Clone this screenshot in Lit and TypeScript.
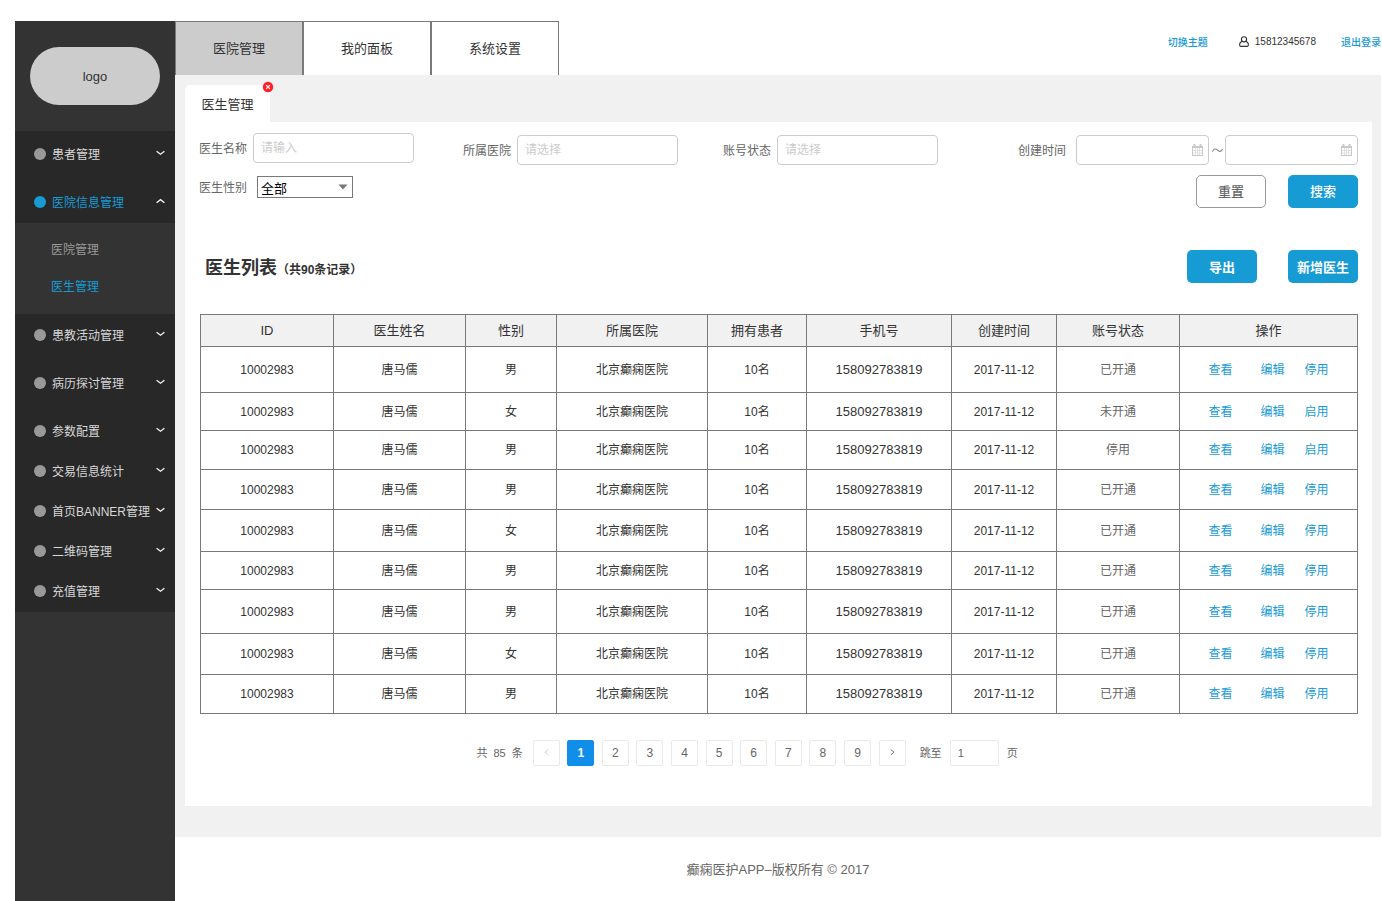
import { LitElement, html, css, svg, nothing } from "lit";
import { customElement, state } from "lit/decorators.js";
import { classMap } from "lit/directives/class-map.js";

interface MenuEntry {
  label: string;
  children?: string[];
}

interface Doctor {
  id: string;
  name: string;
  sex: string;
  hospital: string;
  patients: string;
  phone: string;
  created: string;
  status: string;
}

const UPPER_MENU: MenuEntry[] = [
  { label: "患者管理" },
  { label: "医院信息管理", children: ["医院管理", "医生管理"] },
];

const LOWER_MENU: MenuEntry[] = [
  { label: "患教活动管理" },
  { label: "病历探讨管理" },
  { label: "参数配置" },
  { label: "交易信息统计" },
  { label: "首页BANNER管理" },
  { label: "二维码管理" },
  { label: "充值管理" },
];

const COLUMNS = [
  "ID",
  "医生姓名",
  "性别",
  "所属医院",
  "拥有患者",
  "手机号",
  "创建时间",
  "账号状态",
  "操作",
];

const doctor = (sex: string, status: string): Doctor => ({
  id: "10002983",
  name: "唐马儒",
  sex,
  hospital: "北京癫痫医院",
  patients: "10名",
  phone: "158092783819",
  created: "2017-11-12",
  status,
});

const DOCTORS: Doctor[] = [
  doctor("男", "已开通"),
  doctor("女", "未开通"),
  doctor("男", "停用"),
  doctor("男", "已开通"),
  doctor("女", "已开通"),
  doctor("男", "已开通"),
  doctor("男", "已开通"),
  doctor("女", "已开通"),
  doctor("男", "已开通"),
];

const base = css`
  :host {
    display: block;
    box-sizing: border-box;
  }
  *,
  *::before,
  *::after {
    box-sizing: border-box;
  }
  button,
  input,
  select {
    font: inherit;
    color: inherit;
    margin: 0;
  }
  button {
    cursor: pointer;
  }
  a {
    color: #169bd5;
    text-decoration: none;
  }
`;

@customElement("side-menu")
export class SideMenu extends LitElement {
  static styles = [
    base,
    css`
      :host {
        background: #333333;
        color: #d7d7d7;
        font-size: 12px;
        line-height: 20px;
      }
      .logo {
        display: flex;
        align-items: center;
        justify-content: center;
        height: 58px;
        margin: 26px 15px;
        padding-top: 2px;
        border-radius: 29px;
        background: #cccccc;
        color: #333333;
        font-size: 13px;
      }
      .group {
        display: flex;
        flex-direction: column;
        gap: 20px;
        background: #282828;
        padding: 12px 0 10px;
      }
      .group.upper {
        gap: 28px;
        padding-top: 14px;
      }
      .spaced {
        margin-bottom: 8px;
      }
      .entry {
        display: flex;
        align-items: center;
        gap: 6px;
        width: 100%;
        padding: 0 10px 0 19px;
        border: 0;
        background: none;
        line-height: 20px;
        text-align: left;
        white-space: nowrap;
      }
      .dot {
        flex: none;
        width: 12px;
        height: 12px;
        margin-bottom: 2px;
        border-radius: 50%;
        background: #999999;
      }
      .chevron {
        flex: none;
        margin: 0 0 4px auto;
      }
      .open {
        color: #169bd5;
      }
      .open .dot {
        background: #169bd5;
      }
      .sub {
        display: flex;
        flex-direction: column;
        gap: 17px;
        padding: 17px 0 17px 36px;
      }
      .sub a {
        color: #999999;
      }
      .sub a.current {
        color: #169bd5;
      }
    `,
  ];

  private entry(item: MenuEntry, spaced: boolean) {
    const open = !!item.children;
    return html`<button
      class=${classMap({ entry: true, open, spaced })}
      type="button"
      aria-expanded=${open ? "true" : "false"}
    >
      <span class="dot"></span>
      <span>${item.label}</span>
      <svg class="chevron" width="9" height="6" viewBox="0 0 9 6" fill="none" stroke="#f2f2f2" stroke-width="1.4">
        ${open ? svg`<path d="M0.6 4.8 L4.5 1.6 L8.4 4.8" />` : svg`<path d="M0.6 1.2 L4.5 4.2 L8.4 1.2" />`}
      </svg>
    </button>`;
  }

  render() {
    return html`
      <div class="logo">logo</div>
      <nav>
        <div class="group upper">${UPPER_MENU.map((m) => this.entry(m, false))}</div>
        <div class="sub">
          ${UPPER_MENU[1].children!.map(
            (label) => html`<a href="#" class=${classMap({ current: label === "医生管理" })}>${label}</a>`
          )}
        </div>
        <div class="group">${LOWER_MENU.map((m, i) => this.entry(m, i < 2))}</div>
      </nav>
    `;
  }
}

@customElement("top-bar")
export class TopBar extends LitElement {
  static styles = [
    base,
    css`
      .bar {
        display: flex;
        justify-content: space-between;
        height: 54px;
      }
      .tabs {
        display: flex;
      }
      .tab {
        width: 128px;
        border: 1px solid #797979;
        border-bottom: 0;
        background: #ffffff;
        color: #333333;
        font-size: 13px;
        padding: 0 0 2px;
      }
      .tab.active {
        background: #cccccc;
      }
      .user {
        display: flex;
        align-items: center;
        height: 42px;
        font-size: 10px;
        line-height: 16px;
      }
      .user a {
        padding-top: 2px;
        font-weight: 500;
      }
      .account {
        display: flex;
        align-items: center;
        gap: 6px;
        margin: 0 25px 0 31px;
        color: #333333;
      }
    `,
  ];

  render() {
    return html`
      <header class="bar">
        <div class="tabs">
          ${["医院管理", "我的面板", "系统设置"].map(
            (label, i) => html`<button type="button" class=${classMap({ tab: true, active: i === 0 })}>${label}</button>`
          )}
        </div>
        <div class="user">
          <a href="#">切换主题</a>
          <span class="account">
            <svg width="10" height="12" viewBox="0 0 10 12" fill="none" stroke="#333333" stroke-width="1.1">
              <circle cx="5" cy="3.3" r="2.6" />
              <path d="M3.2 5.2 C1.3 5.9 0.6 7.2 0.6 8.8 Q0.6 10.4 1.6 10.4 H8.4 Q9.4 10.4 9.4 8.8 C9.4 7.2 8.7 5.9 6.8 5.2" />
            </svg>
            15812345678
          </span>
          <a href="#">退出登录</a>
        </div>
      </header>
    `;
  }
}

@customElement("filter-form")
export class FilterForm extends LitElement {
  static styles = [
    base,
    css`
      form {
        display: flex;
        gap: 49px;
        padding: 11px 14px 0;
        color: #666666;
        font-size: 12px;
        line-height: 20px;
      }
      .basic {
        display: flex;
        flex-direction: column;
        gap: 13px;
      }
      .rest {
        flex: 1;
        display: flex;
        flex-direction: column;
        gap: 10px;
        padding-top: 2px;
      }
      .line {
        display: flex;
        gap: 45px;
      }
      .field {
        display: flex;
        align-items: center;
        gap: 6px;
        white-space: nowrap;
      }
      .field.wide {
        gap: 10px;
      }
      .field label {
        padding-top: 2px;
      }
      .period {
        margin-left: auto;
      }
      .text {
        width: 161px;
        height: 30px;
        padding: 0 7px 1px;
        border: 1px solid #cccccc;
        border-radius: 4px;
        background: #ffffff;
      }
      .text::placeholder {
        color: #cccccc;
        opacity: 1;
      }
      .overlay {
        display: grid;
        align-items: center;
      }
      .overlay > * {
        grid-area: 1 / 1;
      }
      .overlay svg {
        justify-self: end;
        margin-right: 5px;
        pointer-events: none;
      }
      .date {
        width: 133px;
        padding-right: 24px;
      }
      .range {
        display: grid;
        grid-template-columns: auto 16px auto;
        align-items: center;
        justify-items: center;
      }
      select {
        appearance: none;
        width: 96px;
        height: 22px;
        padding: 3px 18px 0 3px;
        border: 1px solid #797979;
        border-radius: 0;
        background: #ffffff;
        color: #000000;
        font-size: 13px;
        line-height: 18px;
      }
      .actions {
        display: flex;
        justify-content: flex-end;
        gap: 22px;
      }
      .btn {
        width: 70px;
        height: 33px;
        padding: 0;
        border: 1px solid #169bd5;
        border-radius: 5px;
        background: #169bd5;
        color: #ffffff;
        font-size: 13px;
        font-weight: 500;
      }
      .btn.plain {
        border-color: #999999;
        background: #ffffff;
        color: #666666;
      }
    `,
  ];

  private calendar() {
    return html`<svg width="12" height="13" viewBox="0 0 12 13">
      <rect x="0.5" y="2.5" width="10" height="9" fill="#ffffff" stroke="#c8c8c8" />
      <path d="M0 3 H11" stroke="#c8c8c8" stroke-width="2" />
      <path d="M2.5 0 V2.5 M8.5 0 V2.5" stroke="#c8c8c8" stroke-width="2" />
      <path d="M1 6.5 H10 M1 9 H10 M3.5 4 V11 M5.5 4 V11 M7.5 4 V11" stroke="#dcdcdc" stroke-width="0.8" />
    </svg>`;
  }

  render() {
    return html`
      <form @submit=${(e: Event) => e.preventDefault()}>
        <div class="basic">
          <div class="field">
            <label for="name">医生名称</label>
            <input class="text" id="name" type="text" placeholder="请输入" />
          </div>
          <div class="field wide">
            <label for="sex">医生性别</label>
            <span class="overlay">
              <select id="sex">
                <option>全部</option>
                <option>男</option>
                <option>女</option>
              </select>
              <svg width="10" height="6" viewBox="0 0 10 6"><path d="M0.5 0.5 H9.5 L5 5.6 Z" fill="#797979" /></svg>
            </span>
          </div>
        </div>
        <div class="rest">
          <div class="line">
            <div class="field">
              <label for="hospital">所属医院</label>
              <input class="text" id="hospital" type="text" placeholder="请选择" />
            </div>
            <div class="field">
              <label for="status">账号状态</label>
              <input class="text" id="status" type="text" placeholder="请选择" />
            </div>
            <div class="field wide period">
              <label for="from">创建时间</label>
              <div class="range">
                <span class="overlay"><input class="text date" id="from" type="text" />${this.calendar()}</span>
                <svg width="11" height="5" viewBox="0 0 11 5" fill="none" stroke="#808080" stroke-width="1.1">
                  <path d="M0.5 3.4 C2 0.4 3.8 0.6 5.5 2.2 C7.2 3.8 9 4 10.5 1.2" />
                </svg>
                <span class="overlay"
                  ><input class="text date" id="to" type="text" aria-label="创建时间" />${this.calendar()}</span
                >
              </div>
            </div>
          </div>
          <div class="actions">
            <button class="btn plain" type="reset">重置</button>
            <button class="btn" type="submit">搜索</button>
          </div>
        </div>
      </form>
    `;
  }
}

@customElement("doctor-list")
export class DoctorList extends LitElement {
  static styles = [
    base,
    css`
      :host {
        padding: 0 14px 0 15px;
        color: #333333;
      }
      .head {
        display: flex;
        align-items: center;
        margin: 42px 0 31px;
      }
      h2 {
        margin: 0 auto 0 5px;
        padding-top: 4px;
        font-size: 18px;
        line-height: 24px;
        font-weight: 700;
      }
      h2 small {
        font-size: 12px;
      }
      .buttons {
        display: flex;
        gap: 31px;
      }
      .btn {
        width: 70px;
        height: 33px;
        padding: 0;
        border: 0;
        border-radius: 5px;
        background: #169bd5;
        color: #ffffff;
        font-size: 13px;
        font-weight: 700;
        white-space: nowrap;
      }
      table {
        width: 100%;
        table-layout: fixed;
        border-collapse: collapse;
        font-size: 12px;
        line-height: 18px;
        text-align: center;
      }
      th,
      td {
        padding: 0;
        border: 1px solid #797979;
      }
      th {
        height: 32px;
        background: #f1f1f1;
        font-size: 13px;
        font-weight: 400;
      }
      th:nth-child(1) { width: 133px; }
      th:nth-child(2) { width: 132px; }
      th:nth-child(3) { width: 91px; }
      th:nth-child(4) { width: 151px; }
      th:nth-child(5) { width: 99px; }
      th:nth-child(6) { width: 145px; }
      th:nth-child(7) { width: 105px; }
      th:nth-child(8) { width: 123px; }
      th:nth-child(9) { width: 178px; }
      td { height: 39px; }
      tr:nth-child(1) td { height: 46px; }
      tr:nth-child(2) td { height: 38px; }
      tr:nth-child(4) td { height: 40px; }
      tr:nth-child(5) td { height: 42px; }
      tr:nth-child(6) td { height: 38px; }
      tr:nth-child(7) td { height: 44px; }
      tr:nth-child(8) td { height: 41px; }
      .phone {
        font-size: 13px;
      }
      .status {
        color: #666666;
      }
      .ops {
        display: flex;
        justify-content: center;
        gap: 20px;
      }
      .view {
        margin-right: 8px;
      }
    `,
  ];

  render() {
    return html`
      <div class="head">
        <h2>医生列表<small>（共90条记录）</small></h2>
        <div class="buttons">
          <button class="btn" type="button">导出</button>
          <button class="btn" type="button">新增医生</button>
        </div>
      </div>
      <table>
        <thead>
          <tr>
            ${COLUMNS.map((c) => html`<th scope="col">${c}</th>`)}
          </tr>
        </thead>
        <tbody>
          ${DOCTORS.map(
            (d) => html`<tr>
              <td>${d.id}</td>
              <td>${d.name}</td>
              <td>${d.sex}</td>
              <td>${d.hospital}</td>
              <td>${d.patients}</td>
              <td class="phone">${d.phone}</td>
              <td>${d.created}</td>
              <td class="status">${d.status}</td>
              <td>
                <div class="ops">
                  <a class="view" href="#">查看</a>
                  <a href="#">编辑</a>
                  <a href="#">${d.status === "已开通" ? "停用" : "启用"}</a>
                </div>
              </td>
            </tr>`
          )}
        </tbody>
      </table>
    `;
  }
}

@customElement("page-nav")
export class PageNav extends LitElement {
  @state() private page = 1;

  static styles = [
    base,
    css`
      nav {
        display: flex;
        align-items: center;
        justify-content: center;
        padding: 26px 78px 40px 15px;
        color: #666666;
        font-size: 11px;
        line-height: 26px;
      }
      .total {
        display: flex;
        gap: 6px;
        margin-right: 10px;
      }
      .pages {
        display: flex;
        justify-content: space-between;
        width: 373px;
        margin-right: 14px;
      }
      .page {
        display: flex;
        align-items: center;
        justify-content: center;
        width: 27px;
        height: 26px;
        padding: 0;
        border: 1px solid #e9e9e9;
        border-radius: 2px;
        background: #ffffff;
        font-size: 12px;
        line-height: 24px;
      }
      .page.current {
        border-color: #108ee9;
        background: #108ee9;
        color: #ffffff;
        font-weight: 700;
      }
      .jump {
        display: flex;
        align-items: center;
        gap: 8px;
      }
      .jump input {
        width: 49px;
        height: 26px;
        padding: 0 7px;
        border: 1px solid #e9e9e9;
        border-radius: 2px;
        background: #ffffff;
      }
    `,
  ];

  private arrow(path: string, color: string) {
    return html`<svg width="5" height="8" viewBox="0 0 5 8" fill="none" stroke=${color}><path d=${path} /></svg>`;
  }

  render() {
    return html`
      <nav aria-label="分页">
        <span class="total"><span>共</span><span>85</span><span>条</span></span>
        <div class="pages">
          <button class="page" type="button" aria-label="上一页" ?disabled=${this.page === 1}>
            ${this.arrow("M4.3 0.6 L0.9 3.2 L4.3 5.8", "#d0d0d0")}
          </button>
          ${[1, 2, 3, 4, 5, 6, 7, 8, 9].map(
            (n) => html`<button
              type="button"
              class=${classMap({ page: true, current: n === this.page })}
              aria-current=${n === this.page ? "page" : nothing}
              @click=${() => (this.page = n)}
            >
              ${n}
            </button>`
          )}
          <button class="page" type="button" aria-label="下一页">
            ${this.arrow("M0.7 0.6 L4.1 3.2 L0.7 5.8", "#777777")}
          </button>
        </div>
        <div class="jump">
          <label for="jump">跳至</label>
          <input id="jump" type="text" .value=${"1"} />
          <span>页</span>
        </div>
      </nav>
    `;
  }
}

@customElement("app-root")
export class AppRoot extends LitElement {
  static styles = [
    base,
    css`
      :host {
        display: grid;
        grid-template-columns: 160px minmax(0, 1fr);
        min-height: 100vh;
        padding: 21px 1px 0 15px;
        background: #ffffff;
        color: #333333;
        font-family: "Liberation Sans", "Noto Sans CJK SC", sans-serif;
        font-size: 12px;
      }
      .work {
        padding: 10px 9px 31px 10px;
        background: #f1f1f1;
      }
      .page-tab {
        position: relative;
        display: flex;
        align-items: center;
        justify-content: center;
        width: 85px;
        height: 37px;
        border-radius: 5px 0 0 0;
        background: #ffffff;
        font-size: 13px;
      }
      .close {
        position: absolute;
        top: -4px;
        right: -4px;
        display: flex;
        width: 12px;
        height: 12px;
        padding: 0;
        border: 0;
        background: none;
      }
      .card {
        background: #ffffff;
      }
      footer {
        padding: 23px 0 21px;
        color: #666666;
        font-size: 13px;
        line-height: 20px;
        text-align: center;
      }
    `,
  ];

  connectedCallback() {
    super.connectedCallback();
    this.lang = "zh-CN";
  }

  render() {
    return html`
      <side-menu></side-menu>
      <div>
        <top-bar></top-bar>
        <main class="work">
          <div class="page-tab">
            医生管理
            <button class="close" type="button" aria-label="关闭">
              <svg width="12" height="12" viewBox="0 0 12 12">
                <circle cx="6" cy="6" r="5.2" fill="#ff1f26" />
                <path d="M4.1 4.1 L7.9 7.9 M7.9 4.1 L4.1 7.9" stroke="#ffffff" stroke-width="1.1" />
              </svg>
            </button>
          </div>
          <div class="card">
            <filter-form></filter-form>
            <doctor-list></doctor-list>
            <page-nav></page-nav>
          </div>
        </main>
        <footer>癫痫医护APP–版权所有 © 2017</footer>
      </div>
    `;
  }
}
